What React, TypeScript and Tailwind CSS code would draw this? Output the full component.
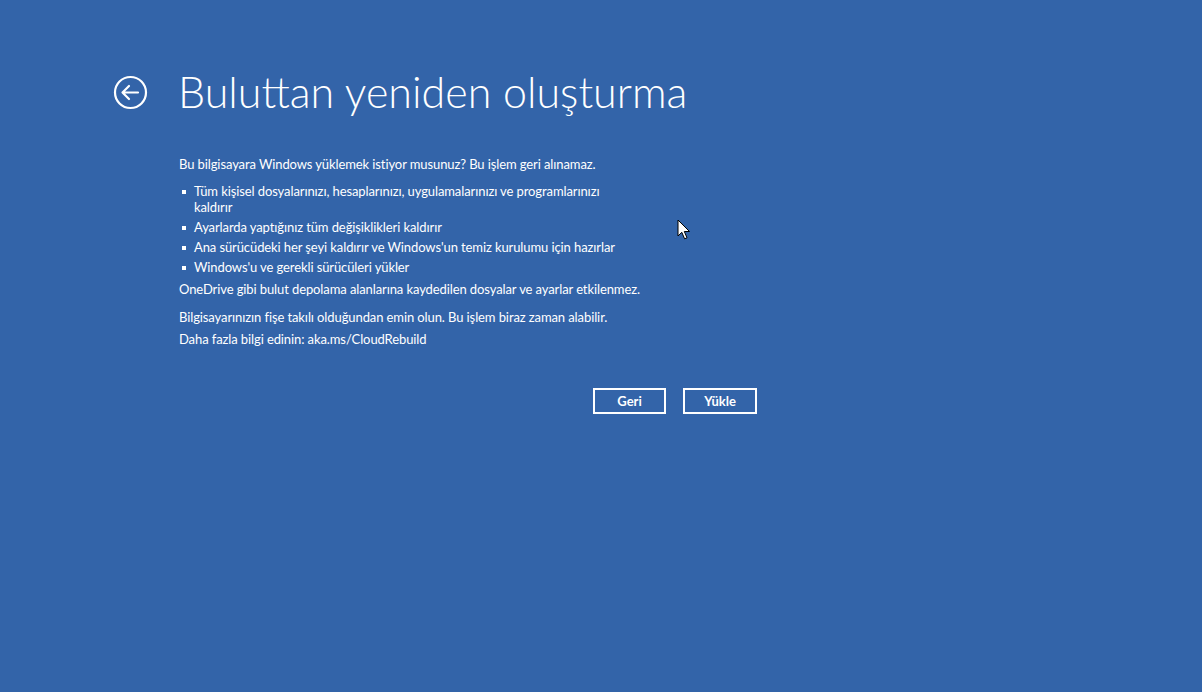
import React from "react";

export default function App() {
  const font = { fontFamily: 'Lato, "Noto Sans", "Liberation Sans", sans-serif' };
  return (
    <div className="relative w-[1202px] h-[692px] bg-[#3364a9] text-white overflow-hidden" style={font}>
      <div className="flex items-center pt-[62px] pl-[113px]">
        <svg width="35" height="35" viewBox="0 0 35 35" className="shrink-0">
          <circle cx="17.5" cy="17.5" r="15.5" fill="none" stroke="white" strokeWidth="2.2" />
          <path d="M9.5 17.5 H25 M16 11 L9.5 17.5 L16 24" fill="none" stroke="white" strokeWidth="2.2" strokeLinecap="round" strokeLinejoin="round" />
        </svg>
        <h1 className="ml-[30px] text-[43px] font-light leading-[60px]">
          Buluttan yeniden oluşturma
        </h1>
      </div>
      <div className="pl-[179px] pt-[32px] text-[13px] leading-[16px] tracking-[-0.1px]">
        <p className="leading-[20px]">Bu bilgisayara Windows yüklemek istiyor musunuz? Bu işlem geri alınamaz.</p>
        <ul className="mt-[9px] flex flex-col gap-[4px]">
          {[
            "Tüm kişisel dosyalarınızı, hesaplarınızı, uygulamalarınızı ve programlarınızı kaldırır",
            "Ayarlarda yaptığınız tüm değişiklikleri kaldırır",
            "Ana sürücüdeki her şeyi kaldırır ve Windows'un temiz kurulumu için hazırlar",
            "Windows'u ve gerekli sürücüleri yükler",
          ].map((t) => (
            <li key={t} className="flex">
              <span className="w-[15px] shrink-0 pl-[3px] pt-[7px]">
                <span className="block w-[4px] h-[4px] bg-white" />
              </span>
              <span className="w-[435px]">{t}</span>
            </li>
          ))}
        </ul>
        <p className="mt-[4px] leading-[20px]">OneDrive gibi bulut depolama alanlarına kaydedilen dosyalar ve ayarlar etkilenmez.</p>
        <p className="mt-[8px] leading-[20px]">Bilgisayarınızın fişe takılı olduğundan emin olun. Bu işlem biraz zaman alabilir.</p>
        <p className="mt-[2px] leading-[20px]">Daha fazla bilgi edinin: aka.ms/CloudRebuild</p>
      </div>
      <div className="flex gap-[17px] pl-[593px] pt-[39px]">
        <button className="w-[73px] h-[26px] border-2 border-white text-[13px] font-bold leading-none">Geri</button>
        <button className="w-[74px] h-[26px] border-2 border-white text-[13px] font-bold leading-none">Yükle</button>
      </div>
      <svg className="absolute left-[677px] top-[219px]" width="14" height="22" viewBox="0 0 14 22">
        <path d="M1 1 L1 17 L4.8 13.3 L7.6 19.8 L10 18.8 L7.3 12.5 L12.5 12.5 Z" fill="white" stroke="black" strokeWidth="1" strokeLinejoin="round" />
      </svg>
    </div>
  );
}
